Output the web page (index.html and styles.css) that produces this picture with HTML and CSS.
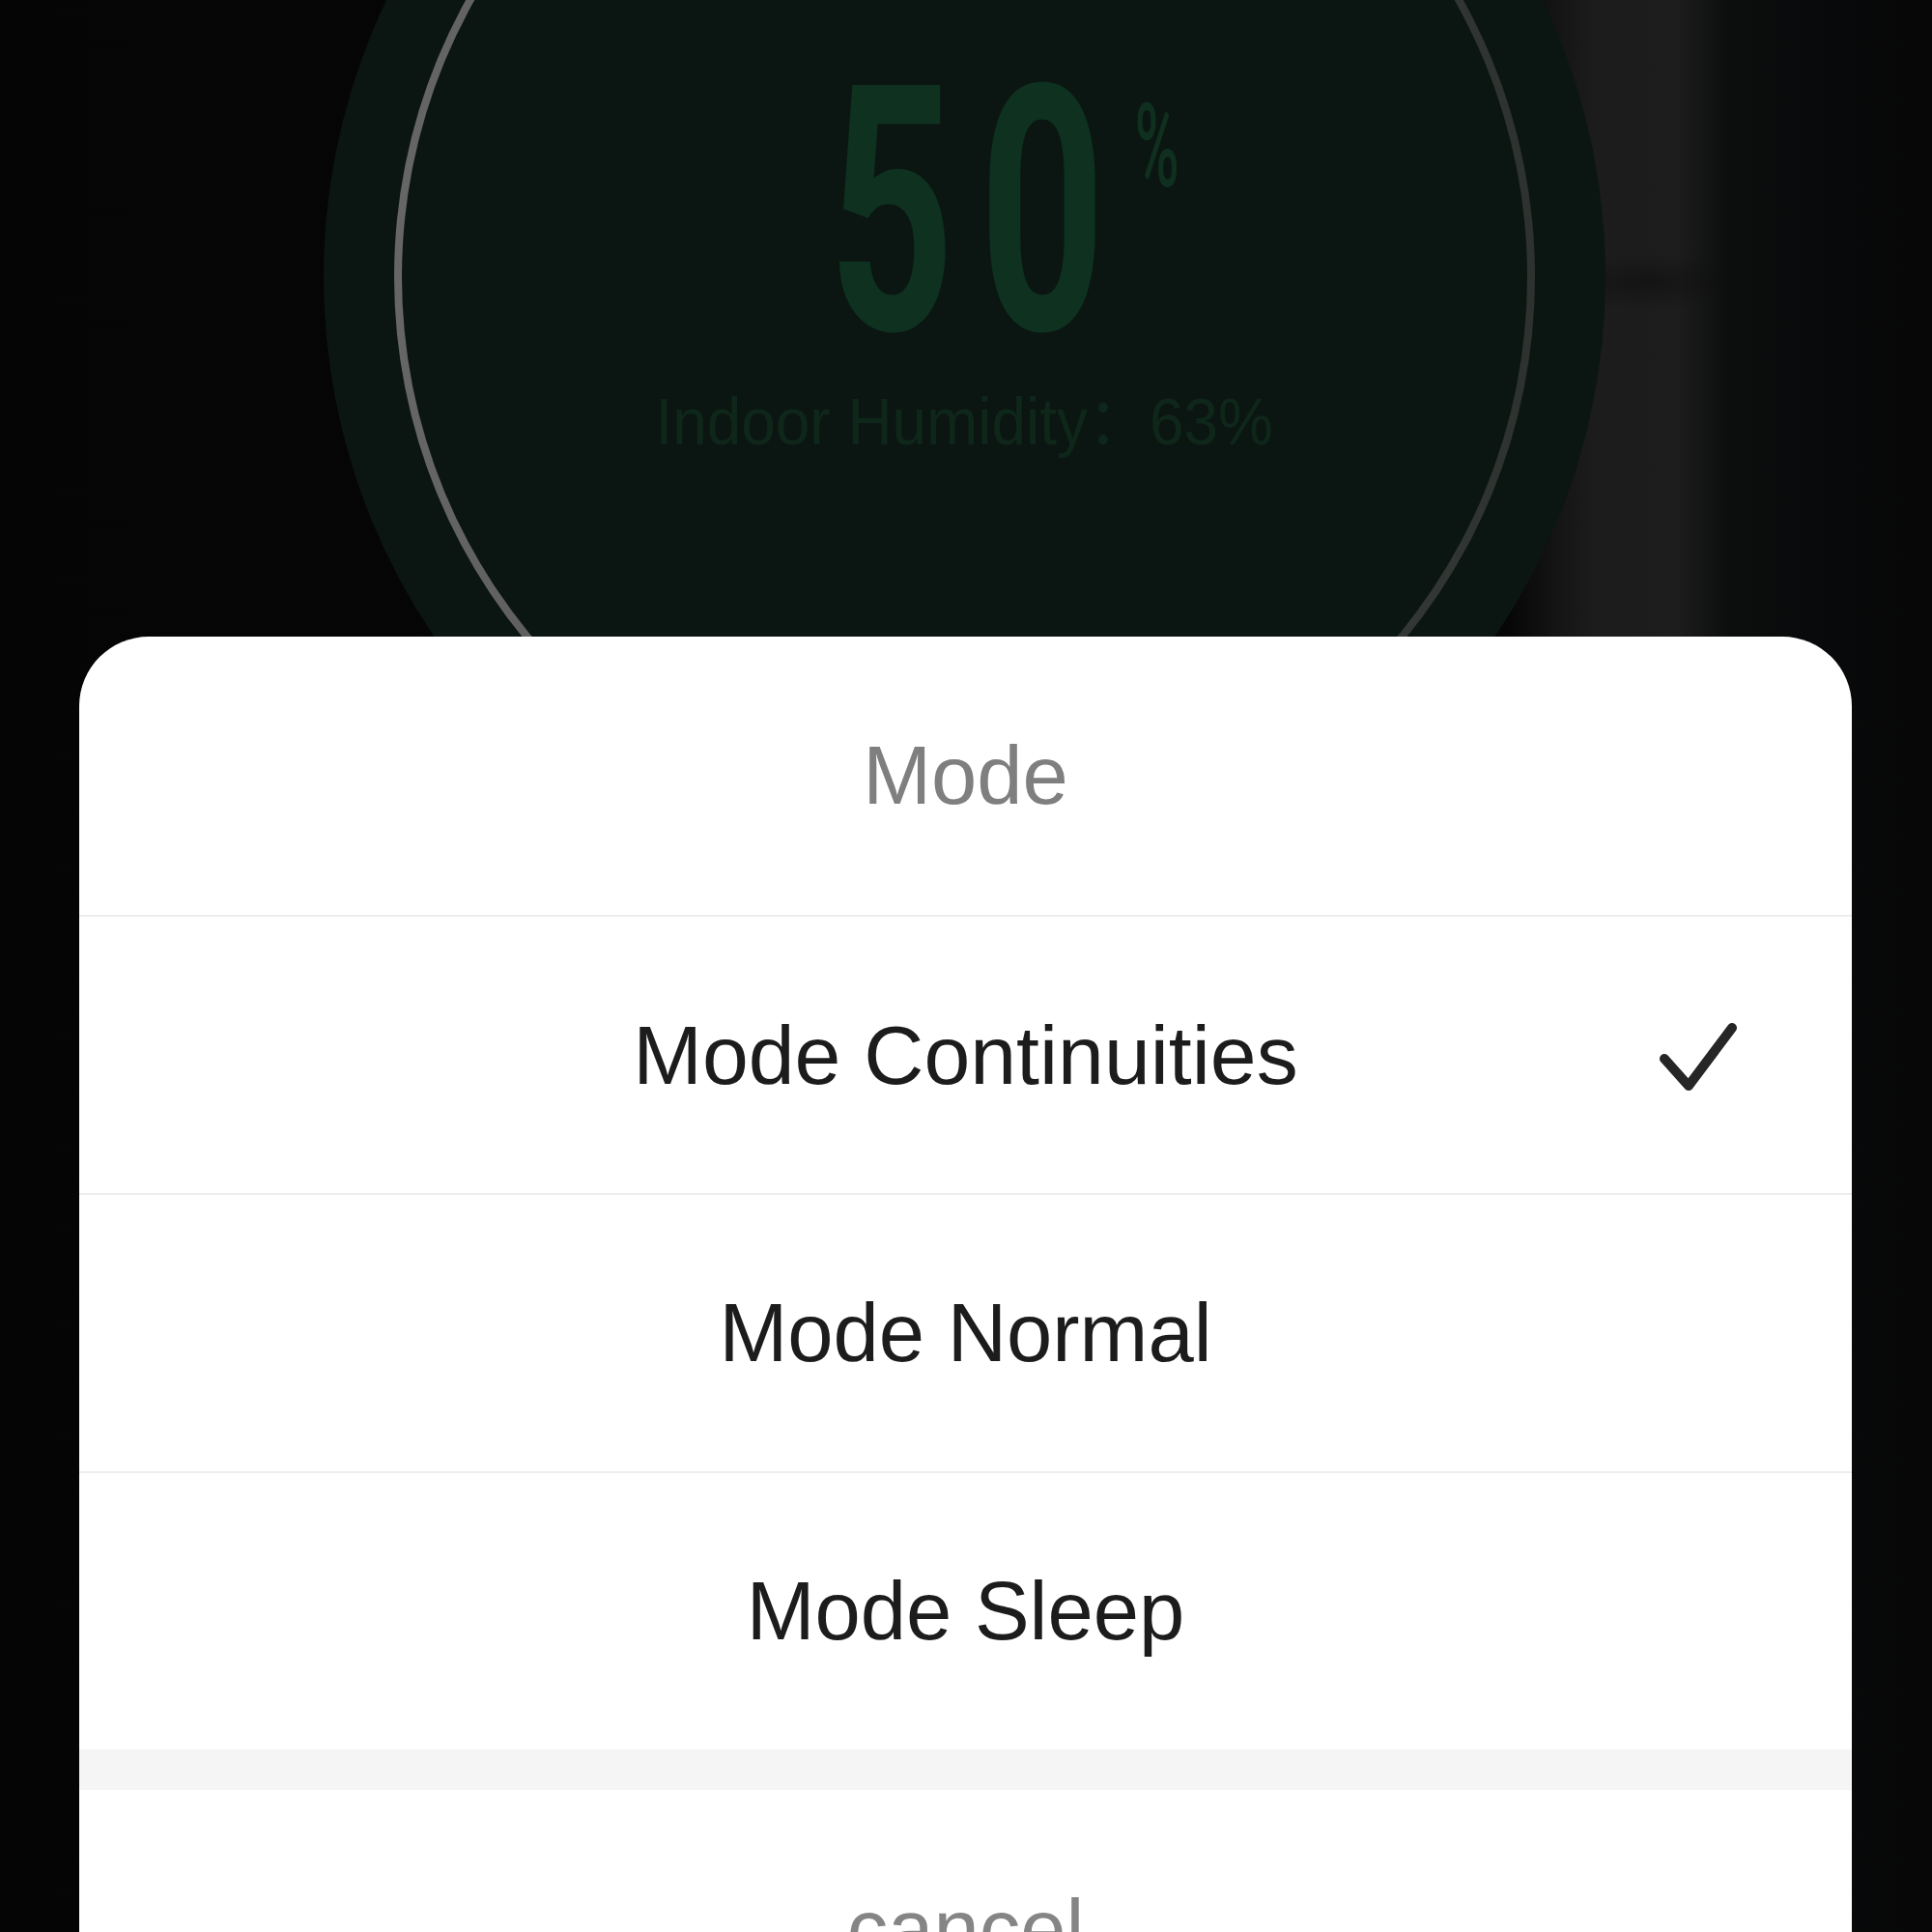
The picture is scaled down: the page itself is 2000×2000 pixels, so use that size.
FILE: index.html
```html
<!DOCTYPE html>
<html lang="en">
<head>
<meta charset="utf-8">
<title>Mode</title>
<link rel="stylesheet" href="styles.css">
</head>
<body>
<div class="screen">
  <div class="gauge">
    <div class="disk">
      <div class="ring">
        <div class="reading">
          <div class="value"><span class="value-text">50</span></div>
          <div class="unit"><span class="unit-text">%</span></div>
        </div>
        <div class="indoor">Indoor Humidity：63%</div>
      </div>
    </div>
  </div>

  <div class="sheet">
    <div class="sheet-title">Mode</div>
    <ul class="options">
      <li class="option is-selected">
        <span class="label">Mode Continuities</span>
        <svg class="check" viewBox="0 0 80 80" width="80" height="80" aria-hidden="true">
          <polyline points="5,44 30,72 75,12" fill="none" stroke="#262626" stroke-width="10" stroke-linecap="round" stroke-linejoin="round"/>
        </svg>
      </li>
      <li class="option"><span class="label">Mode Normal</span></li>
      <li class="option"><span class="label">Mode Sleep</span></li>
    </ul>
    <div class="sheet-gap"></div>
    <div class="cancel">cancel</div>
  </div>
</div>
</body>
</html>
```

FILE: styles.css
```css
html, body {
  margin: 0;
  padding: 0;
  background: #070707;
}

.screen {
  position: relative;
  width: 2000px;
  height: 2000px;
  overflow: hidden;
  background:
    radial-gradient(ellipse 90px 30px at 1705px 292px, rgba(12,12,12,0.55), rgba(12,12,12,0)),
    linear-gradient(90deg, #050505 0, #060606 1560px, #141414 1610px, #1c1c1c 1650px, #1d1d1d 1735px, #0c0d0d 1790px, #08090a 1900px, #070707 2000px);
  font-family: "Liberation Sans", Arial, "Noto Sans CJK SC", sans-serif;
}

/* ---------- background gauge ---------- */
.gauge {
  display: flex;
  padding-left: 335px;
}

.disk {
  width: 1327px;
  height: 1327px;
  margin-top: -377px;
  border-radius: 50%;
  background: #0b1612;
  display: flex;
  align-items: center;
  justify-content: center;
  flex-shrink: 0;
}

.ring {
  width: 1181px;
  height: 1181px;
  box-sizing: border-box;
  border-radius: 50%;
  border: 8px solid transparent;
  background:
    linear-gradient(#0b1612, #0b1612) padding-box,
    linear-gradient(90deg, #666666 0%, #4c4d4c 45%, #2d322f 100%) border-box;
  display: flex;
  flex-direction: column;
  align-items: center;
  padding-top: 338px;
}

.reading {
  display: flex;
  align-items: flex-start;
  justify-content: center;
  height: 356px;
}

.value {
  width: 270px;
  display: flex;
  justify-content: center;
}

.value-text {
  display: block;
  font-family: Roboto, "Liberation Sans", sans-serif;
  font-weight: 700;
  font-size: 356px;
  line-height: 356px;
  letter-spacing: 40px;
  padding-left: 48px;
  color: #0e3120;
  white-space: nowrap;
  transform: scaleX(0.64);
}

.unit {
  width: 44px;
  margin-left: 42px;
  margin-right: -86px;
  margin-top: 50px;
  display: flex;
  justify-content: center;
}

.unit-text {
  display: block;
  font-family: Roboto, "Liberation Sans", sans-serif;
  font-weight: 500;
  font-size: 121px;
  line-height: 121px;
  color: #0f2f1f;
  white-space: nowrap;
  transform: scaleX(0.52);
}

.indoor {
  margin-top: 4px;
  font-family: "Liberation Sans", Arial, "Noto Sans CJK SC", sans-serif;
  font-size: 68px;
  line-height: 68px;
  color: #0f271a;
  white-space: nowrap;
  transform: scaleX(0.94);
}

/* ---------- action sheet ---------- */
.sheet {
  position: absolute;
  left: 82px;
  top: 659px;
  width: 1835px;
  height: 1500px;
  background: #ffffff;
  border-radius: 72px 72px 0 0;
  display: flex;
  flex-direction: column;
}

.sheet-title {
  height: 288px;
  display: flex;
  align-items: center;
  justify-content: center;
  font-size: 85px;
  color: #7f7f7f;
}

.options {
  list-style: none;
  margin: 0;
  padding: 0;
}

.option {
  height: 288px;
  box-sizing: border-box;
  border-top: 2px solid #ededed;
  display: grid;
  grid-template-columns: 1fr auto 1fr;
  align-items: center;
}

.label {
  grid-column: 2;
  font-size: 85px;
  color: #1c1c1c;
  white-space: nowrap;
}

.is-selected .label {
  font-size: 86px;
}

.check {
  grid-column: 3;
  justify-self: end;
  margin-right: 119px;
  display: block;
}

.sheet-gap {
  height: 42px;
  background: #f5f5f5;
}

.cancel {
  height: 288px;
  display: flex;
  align-items: center;
  justify-content: center;
  font-size: 85px;
  color: #858585;
}
```
